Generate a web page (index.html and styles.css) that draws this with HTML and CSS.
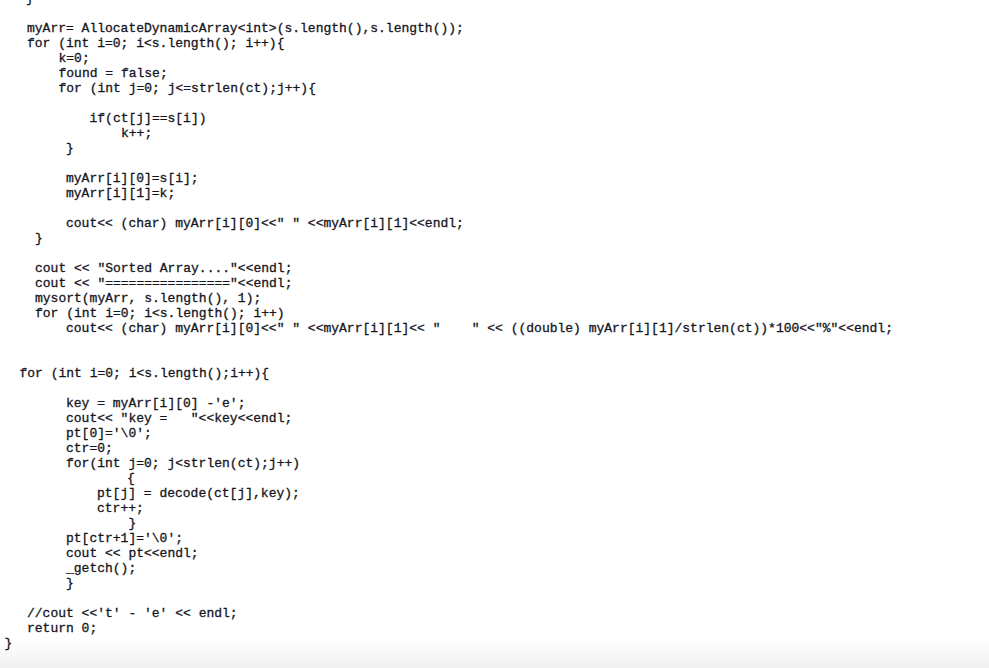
FILE: index.html
```html
<!DOCTYPE html>
<html lang="en">
<head>
<meta charset="utf-8">
<title>Code listing</title>
<link rel="stylesheet" href="styles.css">
</head>
<body>
<div class="code">
<div class="ln x26">}</div>
<div class="ln"></div>
<div class="ln x27">myArr= AllocateDynamicArray&lt;int&gt;(s.length(),s.length());</div>
<div class="ln x27">for (int i=0; i&lt;s.length(); i++){</div>
<div class="ln x58">k=0;</div>
<div class="ln x58">found = false;</div>
<div class="ln x58">for (int j=0; j&lt;=strlen(ct);j++){</div>
<div class="ln"></div>
<div class="ln x89">if(ct[j]==s[i])</div>
<div class="ln x121">k++;</div>
<div class="ln x66">}</div>
<div class="ln"></div>
<div class="ln x66">myArr[i][0]=s[i];</div>
<div class="ln x66">myArr[i][1]=k;</div>
<div class="ln"></div>
<div class="ln x66">cout&lt;&lt; (char) myArr[i][0]&lt;&lt;" " &lt;&lt;myArr[i][1]&lt;&lt;endl;</div>
<div class="ln x35">}</div>
<div class="ln"></div>
<div class="ln x35">cout &lt;&lt; "Sorted Array...."&lt;&lt;endl;</div>
<div class="ln x35">cout &lt;&lt; "================"&lt;&lt;endl;</div>
<div class="ln x35">mysort(myArr, s.length(), 1);</div>
<div class="ln x35">for (int i=0; i&lt;s.length(); i++)</div>
<div class="ln x66">cout&lt;&lt; (char) myArr[i][0]&lt;&lt;" " &lt;&lt;myArr[i][1]&lt;&lt; "    " &lt;&lt; ((double) myArr[i][1]/strlen(ct))*100&lt;&lt;"%"&lt;&lt;endl;</div>
<div class="ln"></div>
<div class="ln"></div>
<div class="ln x19">for (int i=0; i&lt;s.length();i++){</div>
<div class="ln"></div>
<div class="ln x66">key = myArr[i][0] -'e';</div>
<div class="ln x66">cout&lt;&lt; "key =   "&lt;&lt;key&lt;&lt;endl;</div>
<div class="ln x66">pt[0]='\0';</div>
<div class="ln x66">ctr=0;</div>
<div class="ln x66">for(int j=0; j&lt;strlen(ct);j++)</div>
<div class="ln x127">{</div>
<div class="ln x97">pt[j] = decode(ct[j],key);</div>
<div class="ln x97">ctr++;</div>
<div class="ln x128">}</div>
<div class="ln x66">pt[ctr+1]='\0';</div>
<div class="ln x66">cout &lt;&lt; pt&lt;&lt;endl;</div>
<div class="ln x66">_getch();</div>
<div class="ln x66">}</div>
<div class="ln"></div>
<div class="ln x27">//cout &lt;&lt;'t' - 'e' &lt;&lt; endl;</div>
<div class="ln x27">return 0;</div>
<div class="ln x4">}</div>
</div>
</body>
</html>
```

FILE: styles.css
```css
html {
  height: 668px;
  background: linear-gradient(to bottom, #ffffff 0, #ffffff 638px, #f1f1f1 668px);
}

body {
  margin: 0;
  height: 668px;
  overflow: hidden;
}

.code {
  margin-top: -9px;
  font-family: "Liberation Mono", "DejaVu Sans Mono", monospace;
  font-size: 13px;
  line-height: 15px;
  color: #15151c;
  -webkit-text-stroke: 0.3px #15151c;
}

.ln {
  height: 15px;
  white-space: pre;
}

.x4 { padding-left: 4.5px; }
.x19 { padding-left: 19.5px; }
.x26 { padding-left: 26px; }
.x27 { padding-left: 27px; }
.x35 { padding-left: 35px; }
.x58 { padding-left: 58.5px; }
.x66 { padding-left: 66px; }
.x89 { padding-left: 89.5px; }
.x97 { padding-left: 97px; }
.x121 { padding-left: 121px; }
.x127 { padding-left: 127px; }
.x128 { padding-left: 128.5px; }
```
